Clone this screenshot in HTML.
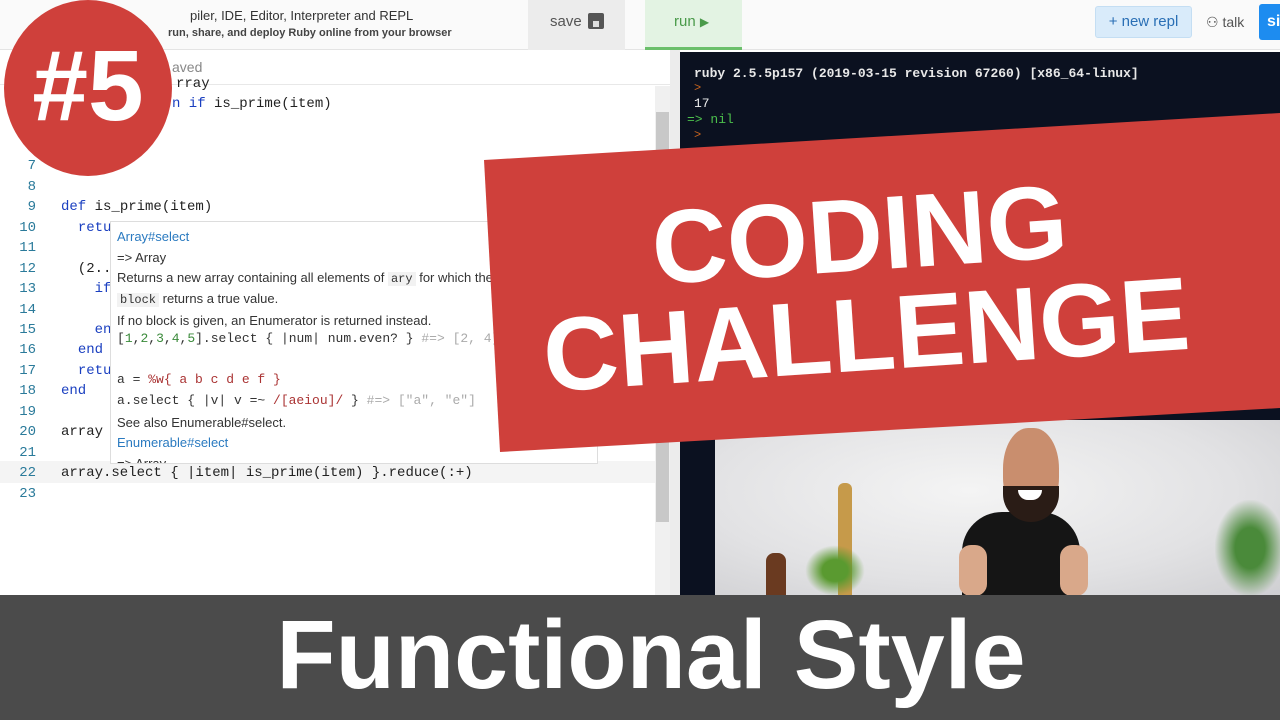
<!DOCTYPE html>
<html><head><meta charset="utf-8"><style>
*{margin:0;padding:0;box-sizing:border-box}
body{width:1280px;height:720px;overflow:hidden;position:relative;background:#fff;font-family:"Liberation Sans",sans-serif}
.abs{position:absolute}
.mono{font-family:"Liberation Mono",monospace;font-size:14px;white-space:pre}
.ln{position:absolute;left:0;width:36px;text-align:right;color:#2a7a9a;font-family:"Liberation Mono",monospace;font-size:14px}
.code{position:absolute;left:61px;color:#222}
.kw{color:#1a3fc0}
</style></head><body>
<!-- top bar -->
<div class="abs" style="left:0;top:0;width:1280px;height:50px;background:#fafafa;border-bottom:1px solid #e4e4e4"></div>
<div class="abs" style="left:190px;top:8px;font-size:13px;color:#333">piler, IDE, Editor, Interpreter and REPL</div>
<div class="abs" style="left:168px;top:27px;font-size:11px;color:#444;font-weight:bold">run, share, and deploy Ruby online from your browser</div>
<div class="abs" style="left:528px;top:0;width:97px;height:50px;background:#ececec"></div>
<div class="abs" style="left:550px;top:13px;font-size:15px;color:#555">save</div>
<div class="abs" style="left:588px;top:13px;width:16px;height:16px;background:#555;border-radius:2px"><div style="margin:8px 0 0 5px;width:6px;height:6px;background:#ddd"></div></div>
<div class="abs" style="left:645px;top:0;width:97px;height:50px;background:#e3f3e3;border-bottom:3px solid #6bbf6b"></div>
<div class="abs" style="left:674px;top:13px;font-size:15px;color:#4a9a4a">run <span style="font-size:12px">▶</span></div>
<div class="abs" style="left:1095px;top:6px;width:97px;height:32px;background:#d9ebfa;border:1px solid #c4def3;border-radius:3px;color:#2a6fb5;font-size:15px;line-height:30px;text-align:center">+ new repl</div>
<div class="abs" style="left:1206px;top:14px;font-size:14px;color:#555">⚇ talk</div>
<div class="abs" style="left:1259px;top:4px;width:30px;height:36px;background:#1d8cf0;border-radius:3px;color:#fff;font-weight:bold;font-size:16px;line-height:36px;padding-left:8px">si</div>
<!-- editor -->
<div class="abs" style="left:0;top:51px;width:670px;height:34px;border-bottom:1px solid #e8e8e8;background:#fff"></div>
<div class="abs" style="left:172px;top:59px;font-size:14px;color:#888">aved</div>
<div class="abs" style="left:655px;top:86px;width:15px;height:510px;background:#f0f0f0"></div>
<div class="abs" style="left:656px;top:112px;width:13px;height:410px;background:#c8c8c8"></div>
<div class="abs" style="left:670px;top:50px;width:10px;height:546px;background:#ececec"></div>
<div class="mono code" style="top:76px;left:176px">rray</div>
<div class="mono code" style="top:96px;left:172px"><span class="kw">n if</span> is_prime(item)</div>
<div class="ln" style="top:158px">7</div><div class="ln" style="top:179px">8</div>
<div class="ln" style="top:199px">9</div><div class="mono code" style="top:199px"><span class="kw">def</span> is_prime(item)</div>
<div class="ln" style="top:220px">10</div><div class="mono code" style="top:220px">  <span class="kw">retu</span></div>
<div class="ln" style="top:240px">11</div>
<div class="ln" style="top:261px">12</div><div class="mono code" style="top:261px">  (2..</div>
<div class="ln" style="top:281px">13</div><div class="mono code" style="top:281px">    <span class="kw">if</span></div>
<div class="ln" style="top:302px">14</div>
<div class="ln" style="top:322px">15</div><div class="mono code" style="top:322px">    <span class="kw">en</span></div>
<div class="ln" style="top:342px">16</div><div class="mono code" style="top:342px">  <span class="kw">end</span></div>
<div class="ln" style="top:363px">17</div><div class="mono code" style="top:363px">  <span class="kw">retu</span></div>
<div class="ln" style="top:383px">18</div><div class="mono code" style="top:383px"><span class="kw">end</span></div>
<div class="ln" style="top:404px">19</div>
<div class="ln" style="top:424px">20</div><div class="mono code" style="top:424px">array</div>
<div class="ln" style="top:445px">21</div>
<div class="abs" style="left:0;top:461px;width:655px;height:22px;background:#f4f4f4"></div>
<div class="ln" style="top:465px">22</div><div class="mono code" style="top:465px">array.select { |item| is_prime(item) }.reduce(:+)</div>
<div class="ln" style="top:486px">23</div>
<!-- tooltip -->
<div class="abs" style="left:110px;top:221px;width:488px;height:243px;background:#fff;border:1px solid #ddd;overflow:hidden;font-size:13px;color:#333">
<div class="abs" style="left:6px;top:7px;color:#2a7ac0">Array#select</div>
<div class="abs" style="left:6px;top:28px">=&gt; Array</div>
<div class="abs" style="left:6px;top:48px;white-space:nowrap">Returns a new array containing all elements of <span class="mono" style="background:#f2f2f2;font-size:12px;padding:0 3px">ary</span> for which the given</div>
<div class="abs" style="left:6px;top:69px"><span class="mono" style="background:#f2f2f2;font-size:12px;padding:0 3px">block</span> returns a true value.</div>
<div class="abs" style="left:6px;top:91px">If no block is given, an Enumerator is returned instead.</div>
<div class="abs mono" style="left:6px;top:109px;font-size:13px">[<span style="color:#3a8a3a">1</span>,<span style="color:#3a8a3a">2</span>,<span style="color:#3a8a3a">3</span>,<span style="color:#3a8a3a">4</span>,<span style="color:#3a8a3a">5</span>].select { |num| num.even? } <span style="color:#aaa">#=&gt; [2, 4]</span></div>
<div class="abs mono" style="left:6px;top:150px;font-size:13px">a = <span style="color:#a33">%w{ a b c d e f }</span></div>
<div class="abs mono" style="left:6px;top:171px;font-size:13px">a.select { |v| v =~ <span style="color:#a33">/[aeiou]/</span> } <span style="color:#aaa">#=&gt; ["a", "e"]</span></div>
<div class="abs" style="left:6px;top:193px">See also Enumerable#select.</div>
<div class="abs" style="left:6px;top:213px;color:#2a7ac0">Enumerable#select</div>
<div class="abs" style="left:6px;top:234px">=&gt; Array</div>
</div>
<!-- console -->
<div class="abs" style="left:680px;top:52px;width:600px;height:544px;background:#0b1120"></div>
<div class="abs" style="left:694px;top:66px;font-family:'Liberation Mono',monospace;font-size:13px;color:#e8e8e8;font-weight:bold">ruby 2.5.5p157 (2019-03-15 revision 67260) [x86_64-linux]</div>
<div class="abs mono" style="left:694px;top:81px;color:#c8641e;font-size:12px">&gt;</div>
<div class="abs mono" style="left:694px;top:96px;color:#eee;font-size:13px">17</div>
<div class="abs mono" style="left:687px;top:112px;color:#4cc04c;font-size:13px">=&gt; nil</div>
<div class="abs mono" style="left:694px;top:128px;color:#c8641e;font-size:12px">&gt;</div>
<!-- photo -->
<div class="abs" style="left:715px;top:420px;width:565px;height:176px;background:radial-gradient(ellipse at 45% 40%,#f4f4f4 0%,#e2e2e4 60%,#cfcfd2 100%)"></div>
<div class="abs" style="left:838px;top:483px;width:14px;height:113px;background:#c69a4a;border-radius:6px 6px 0 0"></div>
<div class="abs" style="left:766px;top:553px;width:20px;height:43px;background:#6a3a20;border-radius:8px 8px 0 0"></div>
<div class="abs" style="left:805px;top:545px;width:60px;height:51px;background:radial-gradient(ellipse,#5a9a30 30%,transparent 70%)"></div>
<div class="abs" style="left:1215px;top:500px;width:70px;height:96px;background:radial-gradient(ellipse,#4a8a3a 30%,transparent 72%)"></div>
<div class="abs" style="left:962px;top:512px;width:118px;height:84px;background:#151515;border-radius:40px 40px 0 0"></div>
<div class="abs" style="left:959px;top:545px;width:28px;height:51px;background:#d9a88a;border-radius:12px"></div>
<div class="abs" style="left:1060px;top:545px;width:28px;height:51px;background:#d9a88a;border-radius:12px"></div>
<div class="abs" style="left:1003px;top:428px;width:56px;height:90px;background:#c98e6e;border-radius:45%"></div>
<div class="abs" style="left:1003px;top:486px;width:56px;height:36px;background:#2a1c16;border-radius:0 0 28px 28px"></div>
<div class="abs" style="left:1018px;top:490px;width:24px;height:10px;background:#fff;border-radius:0 0 12px 12px"></div>
<!-- banner -->
<div class="abs" style="left:0;top:0;width:1280px;height:720px;background:#cf403b;clip-path:polygon(484px 160px,1280px 113px,1280px 408px,500px 452px)"></div>
<div class="abs" style="left:484px;top:150px;width:800px;height:300px;transform:rotate(-3.8deg);transform-origin:50% 50%;color:#fff;font-weight:bold;text-align:center;font-size:104px;line-height:100px;padding-top:34px;padding-right:40px">CODING<br>CHALLENGE</div>
<!-- badge -->
<div class="abs" style="left:4px;top:0;width:168px;height:176px;border-radius:50%;background:#cf403b"></div>
<div class="abs" style="left:4px;top:36px;width:168px;text-align:center;color:#fff;font-weight:bold;font-size:100px;line-height:100px">#5</div>
<!-- bottom bar -->
<div class="abs" style="left:0;top:595px;width:1280px;height:125px;background:#4b4b4b"></div>
<div class="abs" style="left:0;top:600px;width:1280px;text-align:center;color:#fff;font-weight:bold;font-size:97px;line-height:110px;padding-left:22px">Functional Style</div>
</body></html>
